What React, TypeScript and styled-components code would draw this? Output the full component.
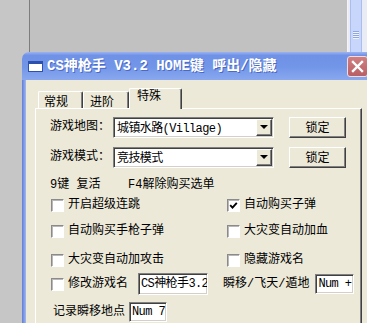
import React from 'react';
import styled, { createGlobalStyle } from 'styled-components';

const GlobalStyle = createGlobalStyle`
  html, body {
    margin: 0;
    padding: 0;
  }
  body {
    width: 367px;
    height: 323px;
    overflow: hidden;
    background: #c3c3c3;
    font-family: "Liberation Mono", "Noto Sans CJK SC", monospace;
  }
`;

const Screen = styled.div`
  position: relative;
  width: 367px;
  height: 323px;
  overflow: hidden;
  display: flex;
  background: #c3c3c3;
`;

const LeftStrip = styled.div`
  width: 29px;
  background: #c6c6c6;
  border-right: 1px solid #7d7d7d;
`;

const BackPane = styled.div`
  flex: 1;
  background: #c1c1c1;
`;

const ScrollTrack = styled.div`
  width: 17px;
  display: flex;
  padding-left: 2px;
  border-left: 1px solid #f4f4f8;
  background: #e9ecf4;
`;

const ScrollThumb = styled.div`
  width: 10px;
  height: 60px;
  display: flex;
  justify-content: center;
  background: #c7d6fa;
  border-left: 1px solid #a9bdf0;
  border-right: 1px solid #a9bdf0;
`;

const Grip = styled.div`
  margin-top: 31px;
  width: 6px;
  height: 8px;
  background: repeating-linear-gradient(to bottom, #8fa6df 0 1px, #eef3ff 1px 2px);
`;

const Window = styled.div`
  position: absolute;
  left: 22px;
  top: 52px;
  width: 351px;
  height: 290px;
  display: flex;
  flex-direction: column;
`;

const TitleBar = styled.div`
  height: 28px;
  flex-shrink: 0;
  display: flex;
  align-items: center;
  padding: 0 5px 0 6px;
  border-radius: 7px 7px 0 0;
  background: linear-gradient(to bottom, #9bb4f2 0%, #6f91e6 12%, #7296e8 55%, #8aa8ef 100%);
`;

const TitleIcon = styled.div`
  width: 15px;
  height: 11px;
  box-sizing: border-box;
  background: #ffffff;
  border: 1px solid #2d4fae;
  border-top-width: 3px;
`;

const TitleText = styled.span`
  margin-left: 4px;
  color: #ffffff;
  font-size: 14px;
  font-weight: bold;
  line-height: 16px;
  white-space: nowrap;
  text-shadow: 1px 1px 0 #4b69c4;
`;

const CloseButton = styled.div`
  margin-left: auto;
  width: 21px;
  height: 21px;
  box-sizing: border-box;
  border: 1px solid #f1dcdc;
  border-radius: 3px;
  background: linear-gradient(to bottom, #d07f82, #b95f66);
  display: flex;
  align-items: center;
  justify-content: center;
`;

const Body = styled.div`
  flex: 1;
  display: flex;
  background: #ece9d8;
`;

const Frame = styled.div`
  width: 4px;
  background: linear-gradient(to right, #5e7fd8, #a3b7ee);
`;

const Content = styled.div`
  flex: 1;
  display: flex;
  flex-direction: column;
  padding: 8px 0 0 9px;
`;

const TabStrip = styled.div`
  height: 20px;
  display: flex;
  align-items: flex-end;
  padding-left: 3px;
`;

const Tab = styled.div<{ $active?: boolean; $w: number; $pl: number }>`
  position: relative;
  z-index: ${(p) => (p.$active ? 2 : 1)};
  width: ${(p) => p.$w}px;
  height: ${(p) => (p.$active ? 21 : 17)}px;
  margin-bottom: ${(p) => (p.$active ? -1 : 0)}px;
  box-sizing: border-box;
  padding: ${(p) => (p.$active ? 1 : 4)}px 0 0 ${(p) => p.$pl}px;
  background: #ece9d8;
  border-top: 1px solid #ffffff;
  border-left: 1px solid #ffffff;
  border-right: 1px solid #404040;
  border-radius: 2px 2px 0 0;
  box-shadow: inset -1px 0 0 #808080;
  font-size: 12px;
  line-height: 14px;
  color: #000000;
`;

const Panel = styled.div`
  width: 327px;
  flex: 1;
  box-sizing: border-box;
  display: flex;
  flex-direction: column;
  padding: 7px 0 0 14px;
  border-top: 1px solid #ffffff;
  border-left: 1px solid #ffffff;
  border-right: 1px solid #404040;
  box-shadow: inset -1px 0 0 #808080;
  font-size: 12px;
  color: #000000;
`;

const Row = styled.div<{ $h: number; $mt: number }>`
  height: ${(p) => p.$h}px;
  margin-top: ${(p) => p.$mt}px;
  display: flex;
  align-items: center;
  white-space: nowrap;
`;

const Label = styled.span<{ $w?: number; $ml?: number }>`
  width: ${(p) => (p.$w ? `${p.$w}px` : 'auto')};
  margin-left: ${(p) => p.$ml ?? 0}px;
  flex-shrink: 0;
  line-height: 14px;
`;

const Combo = styled.div`
  width: 161px;
  height: 21px;
  box-sizing: border-box;
  display: flex;
  align-items: center;
  background: #ffffff;
  border: 1px solid;
  border-color: #808080 #ffffff #ffffff #808080;
  box-shadow: inset 1px 1px 0 #404040, inset -1px -1px 0 #d4d0c8;
  padding: 0 1px 0 3px;
`;

const ComboText = styled.span`
  flex: 1;
  letter-spacing: -0.6px;
  overflow: hidden;
`;

const DropButton = styled.div`
  width: 16px;
  height: 17px;
  box-sizing: border-box;
  display: flex;
  align-items: center;
  justify-content: center;
  background: #ece9d8;
  border: 1px solid;
  border-color: #ffffff #404040 #404040 #ffffff;
  box-shadow: inset -1px -1px 0 #808080;
`;

const Arrow = styled.span`
  width: 0;
  height: 0;
  border-left: 4px solid transparent;
  border-right: 4px solid transparent;
  border-top: 4px solid #000000;
`;

const Button = styled.div`
  margin-left: 15px;
  width: 57px;
  height: 21px;
  box-sizing: border-box;
  display: flex;
  align-items: center;
  justify-content: center;
  background: #ece9d8;
  border: 1px solid;
  border-color: #ffffff #404040 #404040 #ffffff;
  box-shadow: inset -1px -1px 0 #808080;
`;

const CheckGrid = styled.div<{ $mt: number }>`
  margin-top: ${(p) => p.$mt}px;
  height: 16px;
  display: grid;
  grid-template-columns: 176px auto;
  align-items: center;
`;

const CheckItem = styled.label`
  display: flex;
  align-items: center;
  gap: 4px;
  margin-left: 1px;
  white-space: nowrap;
  line-height: 14px;
`;

const Box = styled.span`
  width: 13px;
  height: 13px;
  flex-shrink: 0;
  box-sizing: border-box;
  display: flex;
  align-items: center;
  justify-content: center;
  background: #ffffff;
  border: 1px solid;
  border-color: #8a8a8a #ffffff #ffffff #8a8a8a;
  box-shadow: inset 1px 1px 0 #b8b8b8;
`;

const TextField = styled.div<{ $w: number; $h: number; $ml: number }>`
  width: ${(p) => p.$w}px;
  height: ${(p) => p.$h}px;
  margin-left: ${(p) => p.$ml}px;
  flex-shrink: 0;
  box-sizing: border-box;
  display: flex;
  align-items: center;
  padding-left: 2px;
  overflow: hidden;
  background: #ffffff;
  border: 1px solid;
  border-color: #808080 #ffffff #ffffff #808080;
  box-shadow: inset 1px 1px 0 #404040, inset -1px -1px 0 #d4d0c8;
  letter-spacing: -0.6px;
  line-height: 14px;
`;

function Check({ label, checked }: { label: string; checked?: boolean }): JSX.Element {
  return (
    <CheckItem>
      <Box>
        {checked && (
          <svg width="9" height="9" viewBox="0 0 9 9">
            <path d="M1.2 4.2 L3.5 6.6 L7.8 1.8" fill="none" stroke="#000" strokeWidth="1.9" />
          </svg>
        )}
      </Box>
      {label}
    </CheckItem>
  );
}

function MapCombo({ value }: { value: string }): JSX.Element {
  return (
    <Combo>
      <ComboText>{value}</ComboText>
      <DropButton>
        <Arrow />
      </DropButton>
    </Combo>
  );
}

export default function App(): JSX.Element {
  return (
    <>
      <GlobalStyle />
      <Screen>
        <LeftStrip />
        <BackPane />
        <ScrollTrack>
          <ScrollThumb>
            <Grip />
          </ScrollThumb>
        </ScrollTrack>

        <Window>
          <TitleBar>
            <TitleIcon />
            <TitleText>CS神枪手 V3.2 HOME键 呼出/隐藏</TitleText>
            <CloseButton>
              <svg width="13" height="13" viewBox="0 0 13 13">
                <path d="M2 2 L11 11 M11 2 L2 11" stroke="#fff" strokeWidth="2.4" strokeLinecap="square" />
              </svg>
            </CloseButton>
          </TitleBar>
          <Body>
            <Frame />
            <Content>
              <TabStrip>
                <Tab $w={45} $pl={5}>常规</Tab>
                <Tab $w={46} $pl={6}>进阶</Tab>
                <Tab $active $w={53} $pl={7}>特殊</Tab>
              </TabStrip>
              <Panel>
                <Row $h={22} $mt={0}>
                  <Label $w={63}>游戏地图：</Label>
                  <MapCombo value="城镇水路(Village)" />
                  <Button>锁定</Button>
                </Row>
                <Row $h={22} $mt={8}>
                  <Label $w={63}>游戏模式：</Label>
                  <MapCombo value="竞技模式" />
                  <Button>锁定</Button>
                </Row>
                <Row $h={16} $mt={9}>
                  <Label $w={78}>9键 复活</Label>
                  <Label>F4解除购买选单</Label>
                </Row>
                <CheckGrid $mt={4}>
                  <Check label="开启超级连跳" />
                  <Check label="自动购买子弹" checked />
                </CheckGrid>
                <CheckGrid $mt={10}>
                  <Check label="自动购买手枪子弹" />
                  <Check label="大灾变自动加血" />
                </CheckGrid>
                <CheckGrid $mt={13}>
                  <Check label="大灾变自动加攻击" />
                  <Check label="隐藏游戏名" />
                </CheckGrid>
                <Row $h={22} $mt={5}>
                  <Check label="修改游戏名" />
                  <TextField $w={70} $h={22} $ml={10}>CS神枪手3.2</TextField>
                  <Label $ml={15}>瞬移/飞天/遁地</Label>
                  <TextField $w={39} $h={20} $ml={6}>Num +</TextField>
                </Row>
                <Row $h={20} $mt={7}>
                  <Label $ml={3}>记录瞬移地点</Label>
                  <TextField $w={38} $h={20} $ml={4}>Num 7</TextField>
                </Row>
              </Panel>
            </Content>
            <Frame />
          </Body>
        </Window>
      </Screen>
    </>
  );
}
